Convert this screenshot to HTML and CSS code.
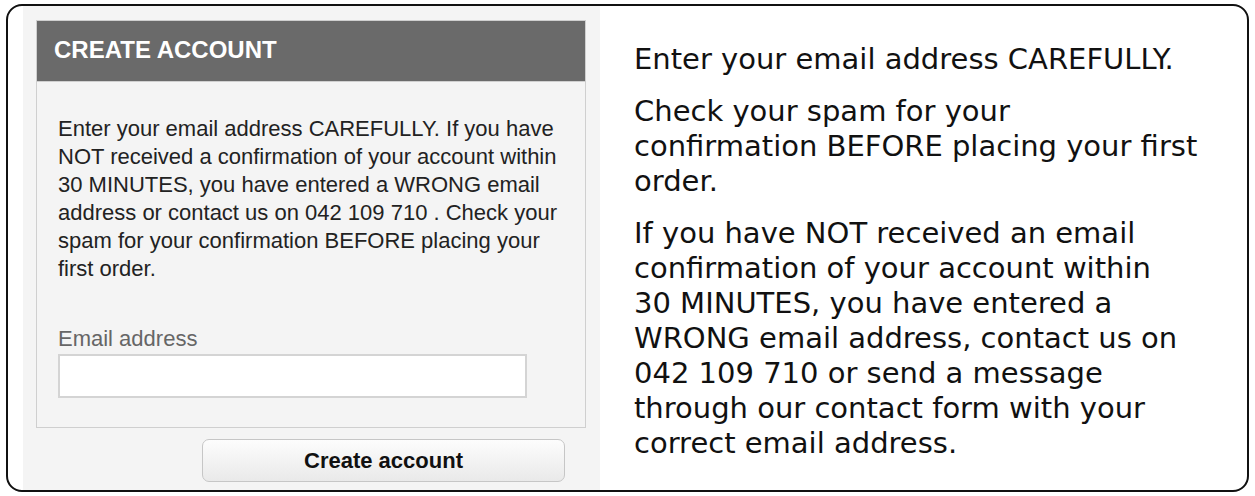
FILE: index.html
```html
<!DOCTYPE html>
<html lang="en">
<head>
    <meta charset="UTF-8">
    <meta name="viewport" content="width=device-width, initial-scale=1.0">
    <title>Create Account</title>
    <link rel="stylesheet" href="styles.css">
</head>
<body>
    <div class="frame">
        <div class="panel">
            <div class="panel-head">CREATE ACCOUNT</div>
            <div class="panel-body">
                <p class="intro">Enter your email address CAREFULLY. If you have NOT received a confirmation of your account within 30 MINUTES, you have entered a WRONG email address or contact us on 042 109 710 . Check your spam for your confirmation BEFORE placing your first order.</p>
                <label for="email">Email address</label>
                <input type="text" id="email">
            </div>
            <div class="actions">
                <button type="button">Create account</button>
            </div>
        </div>
        <div class="notes">
            <p>Enter your email address CAREFULLY.</p>
            <p>Check your spam for your<br>confirmation BEFORE placing your first<br>order.</p>
            <p>If you have NOT received an email<br>confirmation of your account within<br>30 MINUTES, you have entered a<br>WRONG email address, contact us on<br>042 109 710 or send a message<br>through our contact form with your<br>correct email address.</p>
        </div>
    </div>
</body>
</html>
```

FILE: styles.css
```css
body {
    margin: 0;
    padding: 4px 6px;
    background: #fff;
}
.frame {
    box-sizing: border-box;
    width: 1243px;
    height: 488px;
    border: 2px solid #111;
    border-radius: 16px;
    padding: 0 0 0 15px;
    display: flex;
    gap: 34px;
    overflow: hidden;
}
.panel {
    width: 577px;
    flex-shrink: 0;
    background: #f4f4f4;
    padding: 14px 0 0 13px;
    box-sizing: border-box;
    font-family: "Liberation Sans", Arial, sans-serif;
}
.panel-head {
    width: 550px;
    box-sizing: border-box;
    height: 62px;
    background: #6a6a6a;
    border: 1px solid #cfcfcf;
    color: #fff;
    font-weight: bold;
    font-size: 24px;
    line-height: 58px;
    padding-left: 17px;
}
.panel-body {
    width: 550px;
    box-sizing: border-box;
    border: 1px solid #cfcfcf;
    border-top: none;
    padding: 33px 21px 29px;
    display: flex;
    flex-direction: column;
    align-items: flex-start;
}
.intro {
    margin: 0 0 42px;
    font-size: 22px;
    line-height: 28px;
    color: #222;
}
label {
    font-size: 22px;
    line-height: 28px;
    color: #666;
}
input[type="text"] {
    box-sizing: border-box;
    width: 469px;
    height: 44px;
    margin: 1px 0 0;
    border: 2px solid #d4d4d4;
    background: #fff;
}
.actions {
    width: 550px;
    display: flex;
    justify-content: flex-end;
    padding-top: 11px;
}
button {
    width: 363px;
    height: 43px;
    margin-right: 21px;
    border: 1px solid #c6c6c6;
    border-radius: 7px;
    background: linear-gradient(#fdfdfd, #e9e9e9);
    font-family: "Liberation Sans", Arial, sans-serif;
    font-weight: bold;
    font-size: 22px;
    color: #111;
}
.notes {
    width: 600px;
    padding-top: 36px;
    font-family: "DejaVu Sans", sans-serif;
    font-size: 29px;
    line-height: 35px;
    color: #111;
    white-space: nowrap;
}
.notes p {
    margin: 0 0 17px;
}
```
